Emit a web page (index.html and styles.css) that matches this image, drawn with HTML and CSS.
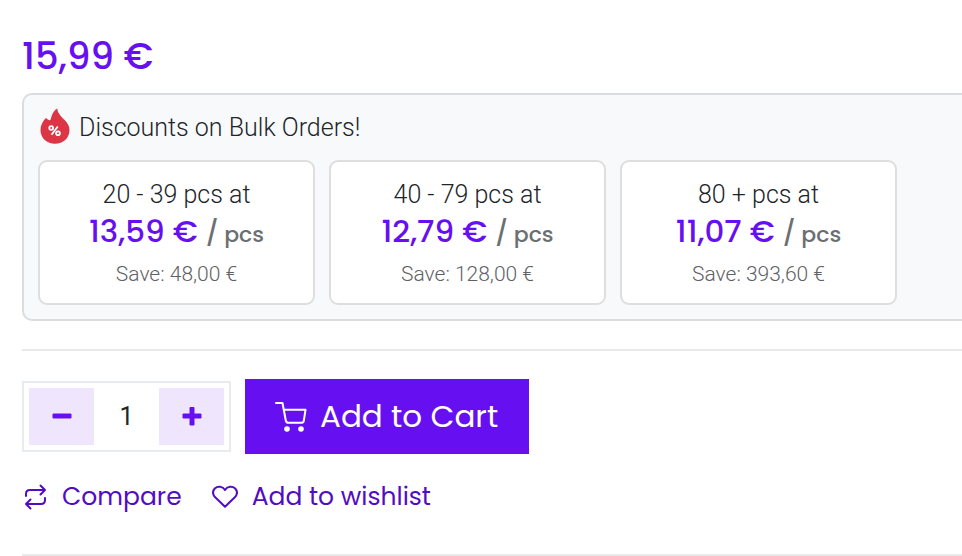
FILE: index.html
```html
<!DOCTYPE html>
<html lang="en">
<head>
    <meta charset="UTF-8">
    <meta name="viewport" content="width=device-width, initial-scale=1.0">
    <title>Product</title>
    <link rel="stylesheet" href="styles.css">
</head>
<body>
    <main class="product">
        <div class="price">15,99 €</div>

        <!-- Bulk discounts -->
        <section class="bulk">
            <h2 class="bulk-title">
                <svg class="flame" viewBox="0 0 30 36" aria-hidden="true">
                    <path fill="#dc3545" d="M17.3.4C17.6 5 21 8 24.600 12C27.600 15 29.500 18 29.500 22C29.500 30 23 35.800 15 35.800C7 35.800.5 30 .5 22C.5 17.500 2.500 13.500 5.800 10C7.300 11 8.500 12.300 9.800 12.300C11.600 12.300 10.800 4 17.300.4Z"/>
                    <g fill="none" stroke="#fff" stroke-width="1.800">
                        <circle cx="11.200" cy="20" r="1.900"/>
                        <circle cx="18" cy="25.200" r="1.900"/>
                        <path d="M17.800 18.500L11.500 26.800"/>
                    </g>
                </svg>
                Discounts on Bulk Orders!
            </h2>
            <div class="tiers">
                <div class="tier">
                    <div class="tier-range">20 - 39 pcs at</div>
                    <div class="tier-price">13,59 € <span class="unit"><span class="slash">/</span> pcs</span></div>
                    <div class="tier-save">Save: 48,00 €</div>
                </div>
                <div class="tier">
                    <div class="tier-range">40 - 79 pcs at</div>
                    <div class="tier-price">12,79 € <span class="unit"><span class="slash">/</span> pcs</span></div>
                    <div class="tier-save">Save: 128,00 €</div>
                </div>
                <div class="tier">
                    <div class="tier-range">80 + pcs at</div>
                    <div class="tier-price">11,07 € <span class="unit"><span class="slash">/</span> pcs</span></div>
                    <div class="tier-save">Save: 393,60 €</div>
                </div>
            </div>
        </section>

        <hr>

        <form class="buy">
            <div class="quantity">
                <button type="button" id="minus" aria-label="Decrease quantity">
                    <svg width="20" height="20" viewBox="0 0 20 20"><path d="M1 7H19V11H1Z"/></svg>
                </button>
                <input type="text" id="quantity" value="1" aria-label="Quantity">
                <button type="button" id="plus" aria-label="Increase quantity">
                    <svg width="20" height="20" viewBox="0 0 20 20"><path d="M1 7H8V0.500H12V7H19V11H12V18H8V11H1Z"/></svg>
                </button>
            </div>
            <button type="submit" class="add-to-cart">
                <svg width="32" height="32" viewBox="0 0 32 32" aria-hidden="true">
                    <path d="M1 2H7.500L10.800 19.500Q11.200 21.800 13.400 21.800H26.500Q28.400 21.800 28.800 19.800L30.500 8.800H9" fill="none" stroke="#fff" stroke-width="2" stroke-linecap="round" stroke-linejoin="round"/>
                    <circle cx="12" cy="28" r="2.800" fill="#fff"/>
                    <circle cx="26" cy="28" r="2.800" fill="#fff"/>
                </svg>
                Add to Cart
            </button>
        </form>

        <div class="actions">
            <a href="#compare">
                <svg width="26" height="26" viewBox="0 0 26 26" aria-hidden="true">
                    <path d="M4 12V10Q4 6 8 6H23M18.500 1.500L23 6L18.500 10.500M23 14V16Q23 20 19 20H4M8.500 15.500L4 20L8.500 24.500"/>
                </svg>
                Compare
            </a>
            <a href="#wishlist">
                <svg width="26" height="26" viewBox="0 0 26 26" aria-hidden="true">
                    <path d="M13 22.800L3.200 13.300C.6 10.400.6 6.900 2.800 4.500C5.600 1.900 10.800 2.200 13 6C15.200 2.200 20.400 1.900 23.200 4.500C25.400 6.900 25.400 10.400 22.800 13.300Z"/>
                </svg>
                Add to wishlist
            </a>
        </div>

        <hr>
    </main>

    <script>
        const quantity = document.getElementById('quantity');

        function changeQuantity(change) {
            const value = parseInt(quantity.value, 10) || 1;
            quantity.value = Math.max(1, value + change);
        }

        document.getElementById('minus').addEventListener('click', () => changeQuantity(-1));
        document.getElementById('plus').addEventListener('click', () => changeQuantity(1));
        document.querySelector('.buy').addEventListener('submit', e => e.preventDefault());
    </script>
</body>
</html>
```
FILE: styles.css
```css
* {
    box-sizing: border-box;
}
body {
    margin: 0;
    font-family: Roboto, sans-serif;
    font-weight: 300;
    color: #212529;
    background-color: #fff;
}
button, .price, .tier-price, .actions {
    font-family: Poppins, Inter, sans-serif;
}
.product {
    padding: 32px 0 0 22px;
}
.price {
    font-size: 37px;
    font-weight: 500;
    line-height: 48px;
    color: #6610f2;
}
.bulk {
    margin-top: 13px;
    padding: 13px 14px 14px;
    border: 2px solid #dadddf;
    border-right: none;
    border-radius: 10px 0 0 10px;
    background-color: #f8f9fb;
}
.bulk-title {
    display: flex;
    align-items: flex-start;
    gap: 9px;
    margin: 0 0 13px;
    font-size: 25px;
    font-weight: 300;
    line-height: 39px;
}
.flame {
    width: 30px;
    height: 36px;
    margin-left: 2px;
}
.tiers {
    display: flex;
    gap: 14px;
}
.tier {
    flex: 0 1 277px;
    padding: 15px 12px 13px;
    border: 2px solid #dedede;
    border-radius: 9px;
    background-color: #fff;
    text-align: center;
}
.tier-range {
    font-size: 25px;
    line-height: 36px;
}
.tier-price {
    font-size: 31px;
    font-weight: 500;
    line-height: 36px;
    color: #6610f2;
}
.unit {
    font-size: 22px;
    color: #6c6f72;
}
.slash {
    font-size: 25px;
}
.tier-save {
    margin-top: 5px;
    font-size: 21px;
    line-height: 32px;
    color: #5f6265;
}
hr {
    margin: 28px 0 0;
    border: none;
    border-top: 2px solid #e9e9e9;
}
.buy {
    display: flex;
    align-items: center;
    gap: 14px;
    margin-top: 28px;
}
.quantity {
    display: flex;
    padding: 5px;
    border: 2px solid #e9ecef;
}
.quantity button {
    display: flex;
    align-items: center;
    justify-content: center;
    width: 65px;
    height: 57px;
    padding: 0;
    border: none;
    background-color: #efe6fe;
    cursor: pointer;
}
.quantity svg {
    fill: #6610f2;
    stroke: #6610f2;
    stroke-width: 1;
    stroke-linejoin: round;
}
.quantity input {
    width: 65px;
    padding: 0;
    border: none;
    font-family: Roboto, sans-serif;
    font-size: 25px;
    color: #212529;
    text-align: center;
}
.add-to-cart {
    display: flex;
    align-items: center;
    gap: 13px;
    height: 75px;
    padding: 0 31px 0 30px;
    border: none;
    background-color: #6610f2;
    color: #fff;
    font-size: 31px;
    cursor: pointer;
}
.actions {
    display: flex;
    gap: 30px;
    margin-top: 25px;
    font-size: 25px;
    font-weight: 400;
    line-height: 36px;
}
.actions a {
    display: flex;
    align-items: center;
    gap: 14px;
    color: #520dc2;
    text-decoration: none;
}
.actions svg {
    fill: none;
    stroke: currentColor;
    stroke-width: 2;
    stroke-linecap: round;
    stroke-linejoin: round;
}
.actions + hr {
    margin-top: 39px;
}
```
